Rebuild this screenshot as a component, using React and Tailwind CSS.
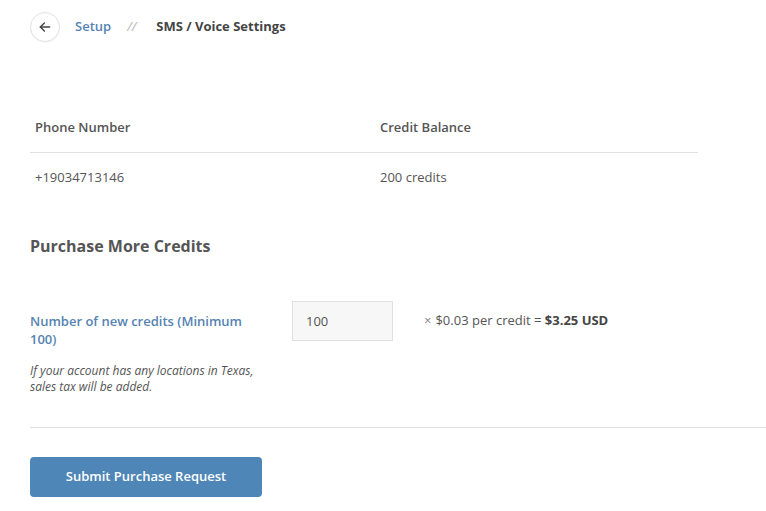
import React, { useState } from "react";

const BackIcon = () => (
  <svg width="14" height="14" viewBox="0 0 24 24" fill="none" stroke="#444" strokeWidth="2.4" strokeLinecap="round" strokeLinejoin="round">
    <path d="M20 12H4" />
    <path d="M11 5l-7 7 7 7" />
  </svg>
);

const App = () => {
  const [credits, setCredits] = useState("100");

  return (
    <div
      className="min-h-[511px] bg-white text-[13px] text-[#555] pl-[30px] pt-[12px]"
      style={{ fontFamily: '"Open Sans", "Noto Sans", sans-serif' }}
    >
      {/* breadcrumb */}
      <div className="flex items-center h-[30px]">
        <button className="w-[30px] h-[30px] rounded-full border border-[#e2e2e2] bg-white flex items-center justify-center shadow-[0_1px_1px_rgba(0,0,0,0.04)]">
          <BackIcon />
        </button>
        <a className="ml-[15px] text-[#5583b3] font-semibold cursor-pointer">Setup</a>
        <span className="ml-[16px] text-[#b5b5b5] italic">//</span>
        <span className="ml-[20px] font-bold text-[#444]">SMS / Voice Settings</span>
      </div>

      {/* credits table */}
      <div className="mt-[61px] w-[668px]">
        <div className="flex h-[50px] items-center border-b border-[#e0e0e0] font-semibold text-[#555]">
          <div className="w-[345px] pl-[5px]">Phone Number</div>
          <div className="pl-[5px]">Credit Balance</div>
        </div>
        <div className="flex h-[50px] items-center text-[#555]">
          <div className="w-[345px] pl-[5px]">+19034713146</div>
          <div className="pl-[5px]">200 credits</div>
        </div>
      </div>

      <h2 className="mt-[32px] text-[16px] leading-[22px] font-bold text-[#555]">Purchase More Credits</h2>

      {/* purchase form */}
      <div className="mt-[44px] flex items-start">
        <div className="w-[262px] pr-[30px]">
          <label className="block mt-[11px] leading-[18px] font-semibold text-[#5583b3]">
            Number of new credits (Minimum 100)
          </label>
          <p className="mt-[15px] text-[12px] leading-[16px] italic text-[#555]">
            If your account has any locations in Texas, sales tax will be added.
          </p>
        </div>
        <input
          value={credits}
          onChange={(e) => setCredits(e.target.value)}
          className="w-[101px] h-[40px] border border-[#e0e0e0] bg-[#f7f7f7] px-[13px] text-[13px] text-[#555] outline-none"
        />
        <div className="ml-[31px] h-[40px] flex items-center text-[#555]">
          <span className="text-[#888] mr-[4px]">×</span>
          $0.03 per credit =&nbsp;<span className="font-bold text-[#444]">$3.25 USD</span>
        </div>
      </div>

      <div className="mt-[32px] border-t border-[#e0e0e0]" />

      <button className="mt-[29px] w-[232px] h-[40px] rounded-[4px] bg-[#4f86b8] text-white font-semibold text-[13px]">
        Submit Purchase Request
      </button>
    </div>
  );
};

export default App;
